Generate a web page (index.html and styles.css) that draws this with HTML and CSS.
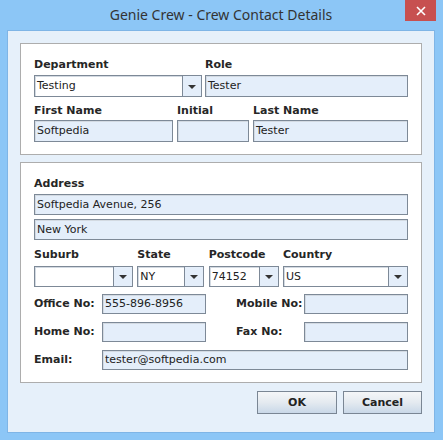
FILE: index.html
```html
<!DOCTYPE html>
<html lang="en">
<head>
  <meta charset="UTF-8" />
  <title>Genie Crew - Crew Contact Details</title>
  <link rel="stylesheet" href="styles.css">
</head>
<body>

<div class="janela">
  <div class="titulo">
    <span>Genie Crew - Crew Contact Details</span>
    <div class="fechar">
      <svg width="10" height="10" viewBox="0 0 10 10"><path d="M1 1 L9 9 M9 1 L1 9" stroke="#fff" stroke-width="1.6" /></svg>
    </div>
  </div>

  <div class="cliente">
    <div class="painel">
      <div class="linha">
        <div class="campo w-dep">
          <label>Department</label>
          <div class="combo branco"><span>Testing</span><b class="seta"></b></div>
        </div>
        <div class="campo w-role">
          <label>Role</label>
          <div class="caixa">Tester</div>
        </div>
      </div>
      <div class="linha l2">
        <div class="campo w-first">
          <label>First Name</label>
          <div class="caixa alta">Softpedia</div>
        </div>
        <div class="campo w-init">
          <label>Initial</label>
          <div class="caixa alta"></div>
        </div>
        <div class="campo w-last">
          <label>Last Name</label>
          <div class="caixa alta">Tester</div>
        </div>
      </div>
    </div>

    <div class="painel p2">
      <div class="campo">
        <label>Address</label>
        <div class="caixa">Softpedia Avenue, 256</div>
        <div class="caixa linha2">New York</div>
      </div>
      <div class="linha l3">
        <div class="campo w-sub">
          <label>Suburb</label>
          <div class="combo branco"><span></span><b class="seta"></b></div>
        </div>
        <div class="campo w-state">
          <label>State</label>
          <div class="combo branco"><span>NY</span><b class="seta"></b></div>
        </div>
        <div class="campo w-post">
          <label>Postcode</label>
          <div class="combo branco"><span>74152</span><b class="seta"></b></div>
        </div>
        <div class="campo w-country">
          <label>Country</label>
          <div class="combo branco"><span>US</span><b class="seta"></b></div>
        </div>
      </div>
      <div class="fone">
        <label>Office No:</label>
        <div class="caixa curta">555-896-8956</div>
        <label class="dir">Mobile No:</label>
        <div class="caixa curta"></div>
      </div>
      <div class="fone">
        <label>Home No:</label>
        <div class="caixa curta"></div>
        <label class="dir">Fax No:</label>
        <div class="caixa curta"></div>
      </div>
      <div class="fone">
        <label>Email:</label>
        <div class="caixa longa">tester@softpedia.com</div>
      </div>
    </div>

    <div class="acoes">
      <button class="ok">OK</button>
      <button class="cancelar">Cancel</button>
    </div>
  </div>
</div>

</body>
</html>
```

FILE: styles.css
```css
* {
  box-sizing: border-box;
}

body {
  margin: 0;
  font-family: "DejaVu Sans", Verdana, sans-serif;
  font-size: 11px;
  color: #222;
  background-color: #8cc6f6;
}

.janela {
  position: relative;
  width: 443px;
  height: 440px;
  background-color: #8cc6f6;
  padding: 0 8px 7px 7px;
  display: flex;
  flex-direction: column;
}

.titulo {
  height: 30px;
  display: flex;
  justify-content: center;
  align-items: center;
  font-family: "Noto Sans", "Open Sans", sans-serif;
  font-size: 14px;
  color: #333;
  padding-bottom: 1px;
}

.fechar {
  position: absolute;
  top: 0;
  right: 7px;
  width: 31px;
  height: 21px;
  background-color: #c75050;
  display: flex;
  justify-content: center;
  align-items: center;
}

.cliente {
  flex: 1;
  background-color: #e6f0fa;
  border: 1px solid #7fb5e6;
  padding: 12px 12px 0 12px;
}

.painel {
  background-color: #fff;
  border: 1px solid #adadad;
  padding: 13px 13px 12px 13px;
}

.painel.p2 {
  margin-top: 7px;
  padding-bottom: 12px;
}

.linha {
  display: flex;
  justify-content: space-between;
}

.linha.l2 {
  margin-top: 6px;
}

.linha.l3 {
  margin-top: 7px;
}

.campo {
  display: flex;
  flex-direction: column;
}

label {
  font-weight: bold;
  line-height: 16px;
  height: 14px;
  margin-bottom: 4px;
  color: #262626;
  white-space: nowrap;
}

.l3 label {
  margin-bottom: 5px;
}

.l2 label {
  margin-bottom: 3px;
}

.w-dep { width: 168px; }
.w-role { width: 203px; }
.w-first { width: 139px; }
.w-init { width: 72px; }
.w-last { width: 155px; }
.w-sub { width: 99px; }
.w-state { width: 67px; }
.w-post { width: 70px; }
.w-country { width: 125px; }

.caixa {
  height: 21px;
  line-height: 19px;
  padding-left: 2px;
  background-color: #e4eefa;
  border: 1px solid #7d8997;
  box-shadow: inset 1px 1px 0 #d3dae2;
  white-space: nowrap;
  overflow: hidden;
}

.painel .linha:first-child .caixa,
.caixa.alta {
  height: 22px;
  line-height: 20px;
}

.caixa.linha2 {
  margin-top: 4px;
}

.combo {
  height: 22px;
  display: flex;
  border: 1px solid #7d8997;
  background-color: #e4eefa;
}

.l3 .combo {
  height: 21px;
}

.combo span {
  flex: 1;
  background-color: #fff;
  line-height: 19px;
  padding-left: 2px;
  box-shadow: inset 1px 1px 0 #d3dae2;
  border-right: 1px solid #7d8997;
}

.seta {
  width: 18px;
  display: flex;
  justify-content: center;
  align-items: center;
}

.seta::after {
  content: "";
  border-left: 4px solid transparent;
  border-right: 4px solid transparent;
  border-top: 4px solid #333;
  margin-top: 1px;
}

.fone {
  display: flex;
  align-items: center;
  margin-top: 7px;
}

.fone + .fone {
  margin-top: 8px;
}

.fone label {
  width: 68px;
  height: 16px;
  margin-bottom: 0;
}

.fone label.dir {
  margin-left: 30px;
}

.caixa.curta {
  width: 104px;
  height: 20px;
  line-height: 18px;
}

.caixa.longa {
  width: 306px;
  height: 20px;
  line-height: 18px;
}

.acoes {
  display: flex;
  justify-content: flex-end;
  gap: 6px;
  margin-top: 8px;
}

.acoes button {
  height: 23px;
  font-family: "DejaVu Sans", Verdana, sans-serif;
  font-size: 11px;
  font-weight: bold;
  color: #222;
  border: 1px solid #7a8694;
  background: linear-gradient(#f4f6f8, #e4eaf0 50%, #c9d8e8);
  padding: 0;
}

.acoes .ok { width: 80px; }
.acoes .cancelar { width: 79px; }
```
